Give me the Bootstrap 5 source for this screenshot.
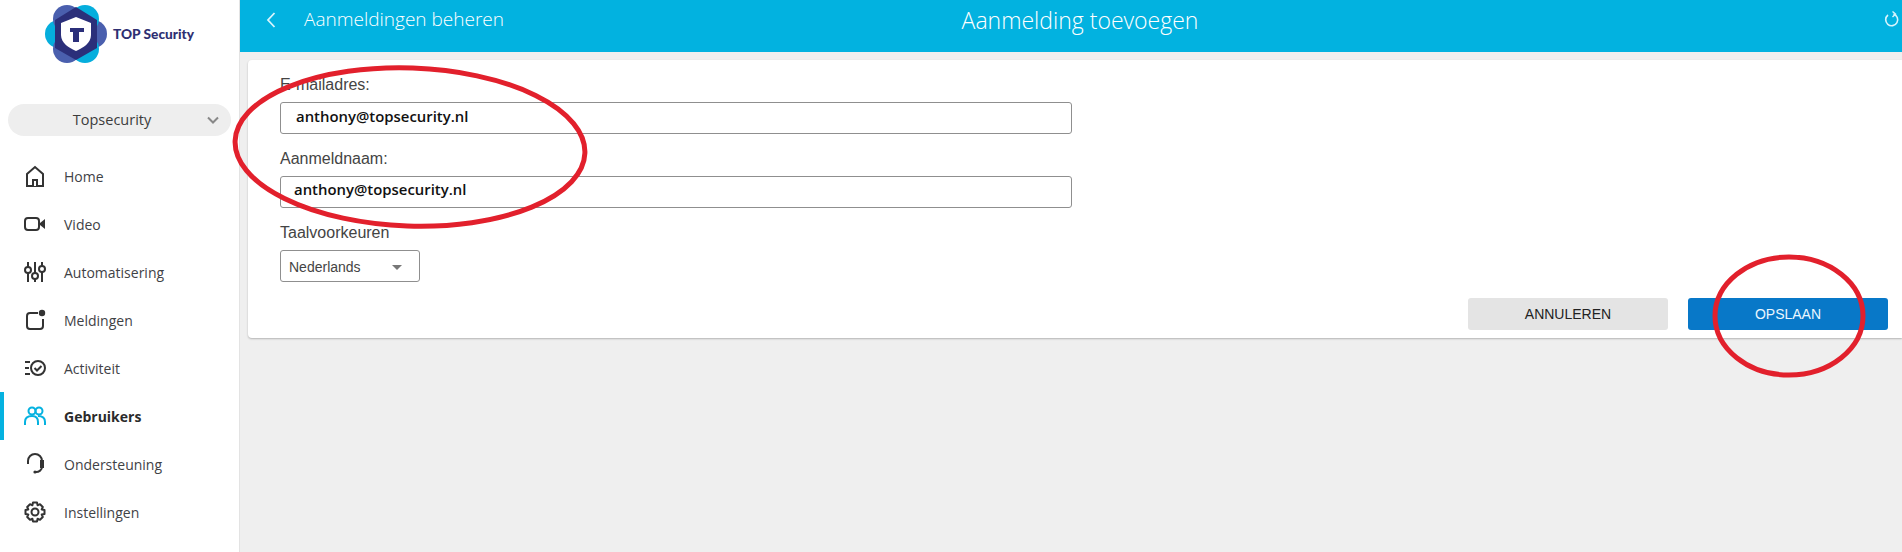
<!DOCTYPE html>
<html lang="nl">
<head>
    <meta charset="UTF-8">
    <title>Aanmelding toevoegen</title>
    <link href="https://cdn.jsdelivr.net/npm/bootstrap@5.3.0/dist/css/bootstrap.min.css" rel="stylesheet">
    <style>
        html, body { height: 552px; overflow: hidden; }
        body { background: #efefef; font-family: "Open Sans", sans-serif; color: #3c3c3c; position: relative; }
        .side-panel { width: 240px; height: 552px; background: #fff; border-right: 1px solid #e3e3e3; flex-shrink: 0; }
        .logo-row { height: 104px; padding: 4px 0 0 45px; }
        .logo-name { font-family: "Lato", sans-serif; font-weight: 900; font-size: 13.7px; color: #2e2f72; margin: 20px 0 0 4px; white-space: nowrap; }
        .site-pill { margin: 0 8px; height: 32px; background: #eee; border-radius: 16px; font-size: 14.5px; padding: 0 12px; }
        .site-pill span { flex: 1; text-align: center; padding-right: 3px; }
        .menu-list { margin-top: 16px; }
        .menu-item { height: 48px; padding-left: 24px; gap: 18px; font-size: 14px; color: #3f4246; }
        .menu-item svg { width: 22px; height: 22px; flex-shrink: 0; }
        .menu-item.is-active { font-weight: 700; color: #2b2b2b; box-shadow: inset 4px 0 0 #05b2e0; }
        .top-band { height: 52px; background: #02b2e0; color: #fff; position: relative; padding-left: 26px; padding-bottom: 13px; }
        .back-title { font-size: 19px; font-weight: 300; margin-left: 28px; }
        .page-title { position: absolute; left: 0; right: 0; top: 3px; text-align: center; font-size: 23px; font-weight: 300; padding-left: 18px; }
        .reload-icon { position: absolute; right: 2px; top: 11px; }
        .form-panel { margin: 8px 0 0 8px; height: 278px; background: #fff; border-radius: 4px 0 0 4px; box-shadow: 0 1px 2px rgba(0,0,0,.25); padding: 16px 14px 8px 32px; font-family: "Liberation Sans", sans-serif; color: #444; }
        .field-label { font-size: 16px; line-height: 18px; margin: 0 0 8px; display: block; }
        .field-box { width: 792px; height: 32px; border: 1px solid #8f8f8f; border-radius: 3px; font-family: "Open Sans", sans-serif; font-weight: 600; font-size: 14.9px; color: #111; padding: 0 15px 3px; margin-bottom: 16px; background: #fff; }
        .field-box.second { padding: 0 13px 6px; }
        .lang-select { width: 140px; height: 32px; border: 1px solid #8f8f8f; border-radius: 3px; font-size: 14px; padding: 2px 8px 0; color: #444; }
        .lang-caret { width: 0; height: 0; border-left: 5px solid transparent; border-right: 5px solid transparent; border-top: 5px solid #777; margin-right: 9px; }
        .form-actions { gap: 20px; margin-top: 16px; }
        .act-btn { width: 200px; height: 32px; border: 0; border-radius: 3px; font-size: 14px; padding: 0; font-family: "Liberation Sans", sans-serif; }
        .act-cancel { background: #e4e4e4; color: #222; }
        .act-save { background: #0878c8; color: #eaf6ff; }
        .red-marks { position: absolute; left: 0; top: 0; pointer-events: none; }
    </style>
</head>
<body>
    <div class="d-flex">
        <!-- Sidebar -->
        <nav class="side-panel">
            <div class="logo-row d-flex align-items-start">
                <svg width="64" height="60" viewBox="0 0 64 60">
                    <circle cx="14" cy="30" r="14" fill="#05aedd"/>
                    <circle cx="48" cy="30" r="14" fill="#4a5fae"/>
                    <circle cx="22" cy="15" r="14" fill="#4a5fae"/>
                    <circle cx="40" cy="15" r="14" fill="#05aedd"/>
                    <circle cx="22" cy="45" r="14" fill="#4a5fae"/>
                    <circle cx="40" cy="45" r="14" fill="#05aedd"/>
                    <polygon points="31,3 52,16 52,44 31,56 10,44 10,16" fill="#2b2f7a"/>
                    <path d="M31 13 L46 19 V31 C46 39 38 44 31 47 C24 44 16 39 16 31 V19 Z" fill="#fff"/>
                    <path d="M25 24 H39 V28 H34 V38 H28 V28 H25 Z" fill="#2b2f7a"/>
                </svg>
                <span class="logo-name">TOP Security</span>
            </div>
            <div class="site-pill d-flex align-items-center">
                <span>Topsecurity</span>
                <svg width="12" height="8" viewBox="0 0 12 8"><path d="M1 1.5 L6 6.5 L11 1.5" fill="none" stroke="#888" stroke-width="2"/></svg>
            </div>
            <div class="menu-list">
                <div class="menu-item d-flex align-items-center">
                    <svg viewBox="0 0 22 22" fill="none" stroke="#333" stroke-width="2"><path d="M3 21 V9 L11 2 L19 9 V21 Z"/><path d="M9 21 V15 H13 V21" fill="#fff"/></svg>
                    Home
                </div>
                <div class="menu-item d-flex align-items-center">
                    <svg viewBox="0 0 22 22" fill="none" stroke="#333" stroke-width="2"><rect x="1" y="5" width="14" height="12" rx="3"/><path d="M16 10 L21 6 V16 L16 12 Z" fill="#333" stroke="none"/></svg>
                    Video
                </div>
                <div class="menu-item d-flex align-items-center">
                    <svg viewBox="0 0 22 22" fill="none" stroke="#333" stroke-width="2"><path d="M4 1 V6 M4 12 V21 M11 1 V12 M11 18 V21 M18 1 V5 M18 11 V21"/><circle cx="4" cy="9" r="3"/><circle cx="11" cy="15" r="3"/><circle cx="18" cy="8" r="3"/></svg>
                    Automatisering
                </div>
                <div class="menu-item d-flex align-items-center">
                    <svg viewBox="0 0 22 22" fill="none" stroke="#333" stroke-width="2"><path d="M14 4 H6 A3 3 0 0 0 3 7 V17 A3 3 0 0 0 6 20 H16 A3 3 0 0 0 19 17 V10"/><circle cx="18" cy="4" r="3.2" fill="#333" stroke="none"/></svg>
                    Meldingen
                </div>
                <div class="menu-item d-flex align-items-center">
                    <svg viewBox="0 0 22 22" fill="none" stroke="#333" stroke-width="2"><path d="M1 5 H6 M1 11 H5 M1 17 H6"/><circle cx="14" cy="11" r="7"/><path d="M10.5 11 L13 13.5 L17.5 9"/></svg>
                    Activiteit
                </div>
                <div class="menu-item is-active d-flex align-items-center">
                    <svg viewBox="0 0 22 22" fill="none" stroke="#05b2e0" stroke-width="2"><circle cx="8" cy="6" r="3.5"/><circle cx="15" cy="6" r="3.5"/><path d="M1 20 V17 C1 13 4 11 8 11 C12 11 14 13 14 17 V20"/><path d="M14 11 C18 11 21 13 21 17 V20"/></svg>
                    Gebruikers
                </div>
                <div class="menu-item d-flex align-items-center">
                    <svg viewBox="0 0 22 22" fill="none" stroke="#333" stroke-width="2"><path d="M4 11 V8 A7 7 0 0 1 18 8 V14 C18 17 15 19 12 19"/><path d="M17 8 H19 V14 H17 Z" fill="#333"/><circle cx="11" cy="19" r="1.6" fill="#333" stroke="none"/></svg>
                    Ondersteuning
                </div>
                <div class="menu-item d-flex align-items-center">
                    <svg viewBox="0 0 22 22" fill="none" stroke="#333" stroke-width="2"><circle cx="11" cy="11" r="3.5"/><path d="M9 1.5 H13 L13.6 4.3 L16 3.2 L18.8 6 L17.7 8.4 L20.5 9 V13 L17.7 13.6 L18.8 16 L16 18.8 L13.6 17.7 L13 20.5 H9 L8.4 17.7 L6 18.8 L3.2 16 L4.3 13.6 L1.5 13 V9 L4.3 8.4 L3.2 6 L6 3.2 L8.4 4.3 Z" stroke-linejoin="round"/></svg>
                    Instellingen
                </div>
            </div>
        </nav>

        <!-- Main part -->
        <main class="flex-grow-1">
            <div class="top-band d-flex align-items-center">
                <svg width="10" height="16" viewBox="0 0 10 16"><path d="M8.5 1 L2 8 L8.5 15" fill="none" stroke="#d8f4fc" stroke-width="1.8"/></svg>
                <span class="back-title">Aanmeldingen beheren</span>
                <div class="page-title">Aanmelding toevoegen</div>
                <svg class="reload-icon" width="16" height="16" viewBox="0 0 16 16" fill="none" stroke="#d8f4fc" stroke-width="1.6"><path d="M9.5 3 A6 6 0 1 1 4 4"/><path d="M8.5 0.5 L11.5 3 L8.5 6" stroke-width="1.4"/></svg>
            </div>
            <div class="form-panel">
                <label class="field-label">E-mailadres:</label>
                <div class="field-box d-flex align-items-center">anthony@topsecurity.nl</div>
                <label class="field-label">Aanmeldnaam:</label>
                <div class="field-box second d-flex align-items-center">anthony@topsecurity.nl</div>
                <label class="field-label">Taalvoorkeuren</label>
                <div class="lang-select d-flex align-items-center justify-content-between">
                    <span>Nederlands</span><span class="lang-caret"></span>
                </div>
                <div class="form-actions d-flex justify-content-end">
                    <button type="button" class="btn act-btn act-cancel">ANNULEREN</button>
                    <button type="button" class="btn act-btn act-save">OPSLAAN</button>
                </div>
            </div>
        </main>
    </div>

    <!-- Red hand-drawn marks over the page -->
    <svg class="red-marks" width="1902" height="552" fill="none" stroke="#e2202c" stroke-width="5">
        <ellipse cx="410" cy="147" rx="175" ry="79" transform="rotate(2 410 147)"/>
        <ellipse cx="1789" cy="316" rx="74" ry="59"/>
    </svg>

    <script src="https://cdn.jsdelivr.net/npm/bootstrap@5.3.0/dist/js/bootstrap.bundle.min.js"></script>
</body>
</html>
